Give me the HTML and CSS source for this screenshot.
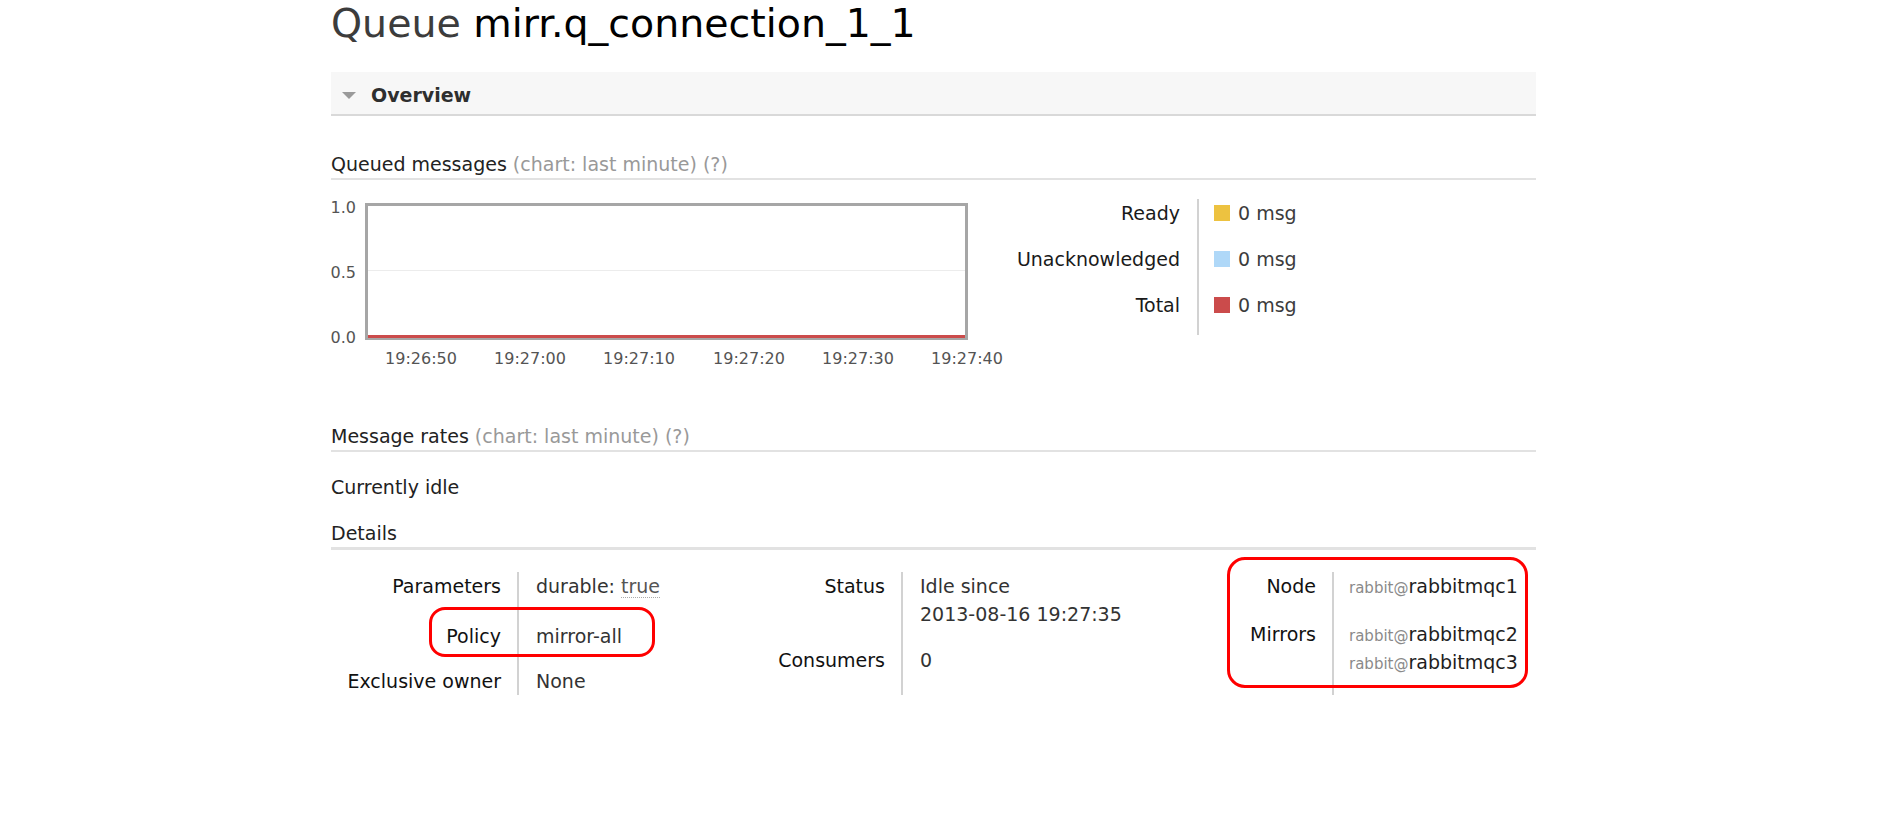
FILE: index.html
```html
<!DOCTYPE html>
<html>
<head>
<meta charset="utf-8">
<link rel="stylesheet" href="styles.css">
</head>
<body>
<div class="page">
  <h1 class="title"><span class="kind">Queue</span> mirr.q_connection_1_1</h1>
  <div class="section">
    <div class="section-head"><span class="tri"></span><span class="section-title">Overview</span></div>
    <div class="section-body">
      <h3 class="sub q">Queued messages <span class="muted">(chart: last minute) (?)</span></h3>
      <div class="chart-row">
        <svg class="chart" width="680" height="172" viewBox="0 0 680 172">
          <rect x="35.5" y="5.5" width="600" height="134" fill="#ffffff" stroke="#a6a6a6" stroke-width="3"/>
          <line x1="37" y1="71.5" x2="634" y2="71.5" stroke="#ececec" stroke-width="1"/>
          <line x1="37" y1="137.5" x2="634" y2="137.5" stroke="#cb4b4b" stroke-width="3"/>
          <g class="axis">
            <text x="25" y="14" text-anchor="end">1.0</text>
            <text x="25" y="79" text-anchor="end">0.5</text>
            <text x="25" y="144" text-anchor="end">0.0</text>
            <text x="90" y="165" text-anchor="middle">19:26:50</text>
            <text x="199" y="165" text-anchor="middle">19:27:00</text>
            <text x="308" y="165" text-anchor="middle">19:27:10</text>
            <text x="418" y="165" text-anchor="middle">19:27:20</text>
            <text x="527" y="165" text-anchor="middle">19:27:30</text>
            <text x="636" y="165" text-anchor="middle">19:27:40</text>
          </g>
        </svg>
        <div class="legend">
          <div class="legend-labels">
            <div>Ready</div>
            <div>Unacknowledged</div>
            <div>Total</div>
          </div>
          <div class="legend-values">
            <div class="lv"><span class="sw sw-ready"></span>0 msg</div>
            <div class="lv"><span class="sw sw-unack"></span>0 msg</div>
            <div class="lv"><span class="sw sw-total"></span>0 msg</div>
          </div>
        </div>
      </div>
      <h3 class="sub rates">Message rates <span class="muted">(chart: last minute) (?)</span></h3>
      <p class="idle">Currently idle</p>
      <h3 class="sub details">Details</h3>
      <div class="facts-row">
        <div class="facts f1">
          <div class="th pb22">Parameters</div><div class="td pb22">durable: <span class="abbr">true</span></div>
          <div class="th pb17">Policy</div><div class="td pb17">mirror-all</div>
          <div class="th">Exclusive owner</div><div class="td">None</div>
        </div>
        <div class="facts f2">
          <div class="th pb18">Status</div><div class="td pb18">Idle since<br>2013-08-16 19:27:35</div>
          <div class="th">Consumers</div><div class="td">0</div>
        </div>
        <div class="facts f3">
          <div class="th pb20">Node</div><div class="td pb20"><span class="host">rabbit@</span>rabbitmqc1</div>
          <div class="th">Mirrors</div><div class="td"><span class="host">rabbit@</span>rabbitmqc2<br><span class="host">rabbit@</span>rabbitmqc3</div>
        </div>
        <div class="hl hl-policy"></div>
        <div class="hl hl-node"></div>
      </div>
    </div>
  </div>
</div>
</body>
</html>
```

FILE: styles.css
```css
html, body {
  margin: 0;
  padding: 0;
  background: #ffffff;
}

body {
  font-family: "DejaVu Sans", Verdana, sans-serif;
  font-size: 19px;
  line-height: 22px;
  color: #222222;
}

.page {
  margin-left: 331px;
  width: 1205px;
}

.title {
  margin: 0;
  font-family: "DejaVu Sans", Verdana, sans-serif;
  font-weight: normal;
  font-size: 39.5px;
  line-height: 46px;
  color: #000000;
}

.title .kind {
  color: #3c3c3c;
}

.section-head {
  margin-top: 26px;
  height: 22px;
  padding: 12px 0 8px 11px;
  background: #f7f7f7;
  border-bottom: 2px solid #d9d9d9;
  display: flex;
  align-items: center;
}

.tri {
  width: 0;
  height: 0;
  border-left: 7px solid transparent;
  border-right: 7px solid transparent;
  border-top: 7px solid #9a9a9a;
  margin-right: 15px;
}

.section-title {
  font-weight: bold;
  color: #2e2e2e;
}

.sub {
  margin: 0;
  font-size: 19px;
  font-weight: normal;
  line-height: 22px;
  padding-bottom: 3px;
  border-bottom: 2px solid #e2e2e2;
  color: #222222;
}

.sub.q {
  margin-top: 37px;
}

.sub.rates {
  margin-top: 54px;
}

.sub.details {
  margin-top: 24px;
  border-bottom-width: 3px;
}

.muted {
  color: #999999;
}

.chart-row {
  margin-top: 19px;
  display: flex;
  align-items: flex-start;
}

.chart {
  display: block;
  flex: none;
}

.axis text {
  font-family: "DejaVu Sans", Verdana, sans-serif;
  font-size: 16px;
  fill: #545454;
}

.legend {
  display: flex;
}

.legend-labels {
  width: 169px;
  padding: 3px 17px 19px 0;
  text-align: right;
  display: flex;
  flex-direction: column;
  gap: 24px;
  color: #1a1a1a;
}

.legend-values {
  border-left: 2px solid #d2d2d2;
  padding: 3px 0 19px 15px;
  display: flex;
  flex-direction: column;
  gap: 24px;
  color: #3c3c3c;
}

.lv {
  display: flex;
  align-items: center;
  gap: 8px;
  height: 22px;
}

.sw {
  width: 16px;
  height: 16px;
  display: inline-block;
}

.sw-ready { background: #edc240; }
.sw-unack { background: #afd8f8; }
.sw-total { background: #cb4b4b; }

.idle {
  margin: 24px 0 0 0;
  color: #222222;
}

.facts-row {
  position: relative;
  margin-top: 22px;
  display: flex;
  align-items: stretch;
}

.facts {
  display: grid;
  line-height: 28px;
}

.f1 {
  grid-template-columns: 186px 163px;
  grid-template-rows: auto auto 1fr;
}

.f2 {
  grid-template-columns: 221px 280px;
  grid-template-rows: auto 1fr;
}

.f3 {
  grid-template-columns: 151px 1fr;
  grid-template-rows: auto 1fr;
}

.th {
  text-align: right;
  padding-right: 16px;
  color: #111111;
  white-space: nowrap;
}

.td {
  border-left: 2px solid #d2d2d2;
  padding-left: 17px;
  color: #333333;
  white-space: nowrap;
}

.f3 .td {
  padding-left: 15px;
  color: #1e1e1e;
}

.pb17 { padding-bottom: 17px; }
.pb18 { padding-bottom: 18px; }
.pb20 { padding-bottom: 20px; }
.pb22 { padding-bottom: 22px; }

.abbr {
  color: #555555;
  border-bottom: 1px dotted #aaaaaa;
}

.host {
  font-size: 15px;
  line-height: 1;
  color: #8a8a8a;
}

.hl {
  position: absolute;
  box-sizing: border-box;
  border: 3px solid #ff0000;
  pointer-events: none;
}

.hl-policy {
  left: 98px;
  top: 35px;
  width: 226px;
  height: 50px;
  border-radius: 16px;
}

.hl-node {
  left: 896px;
  top: -15px;
  width: 301px;
  height: 131px;
  border-radius: 18px;
}
```
